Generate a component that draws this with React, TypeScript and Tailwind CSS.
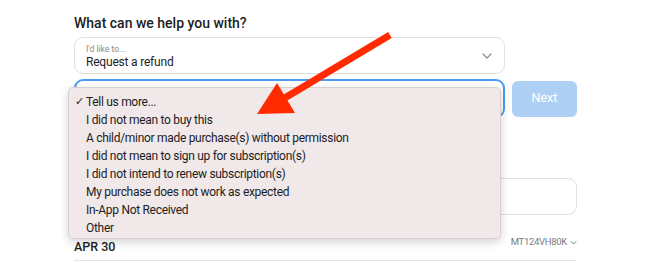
const options = [
  'I did not mean to buy this',
  'A child/minor made purchase(s) without permission',
  'I did not mean to sign up for subscription(s)',
  'I did not intend to renew subscription(s)',
  'My purchase does not work as expected',
  'In-App Not Received',
  'Other',
]

export default function App() {
  return (
    <div className="relative h-[263px] w-[650px] overflow-hidden bg-white text-[#1d1d1f] font-['Roboto','Liberation_Sans',Arial,sans-serif]">
      <div className="ml-[74px] w-[503px] pt-[14px]">
        <h1 className="text-[14px] font-medium leading-[18px]">What can we help you with?</h1>

        {/* first select */}
        <div className="mt-[5px] flex h-[37px] w-[431px] items-center justify-between rounded-[9px] border border-[#e0e0e0] pl-[11px] pr-[12px]">
          <div className="flex flex-col pt-[3px]">
            <span className="text-[8.5px] leading-[11px] text-[#8a8a8e]">I'd like to...</span>
            <span className="text-[12px] leading-[15px] tracking-[-0.2px]">Request a refund</span>
          </div>
          <svg width="10" height="6" viewBox="0 0 10 6" fill="none">
            <path d="M1 1l4 4 4-4" stroke="#8a8a8e" strokeWidth="1.2" strokeLinecap="round" strokeLinejoin="round" />
          </svg>
        </div>

        {/* second select + next */}
        <div className="mt-[5px] flex items-center">
          <div className="h-[39px] w-[431px] rounded-[9px] border-2 border-[#4a9df2]" />
          <button className="ml-[7px] h-[36px] w-[65px] rounded-[6px] bg-[#aed0f5] text-[12.5px] text-white">
            Next
          </button>
        </div>

        {/* hidden field */}
        <div className="mt-[60px] h-[37px] w-[503px] rounded-[9px] border border-[#e0e0e0]" />

        <div className="mt-[24px] flex items-center justify-between">
          <span className="text-[12.5px] font-medium leading-[16px]">APR 30</span>
          <span className="-mt-[10px] flex items-center gap-[3px] text-[9.5px] tracking-[-0.3px] text-[#7a7a7e]">
            MT124VH80K
            <svg width="7" height="5" viewBox="0 0 7 5" fill="none">
              <path d="M1 1.5l2.5 2.5 2.5-2.5" stroke="#7a7a7e" strokeWidth="1" strokeLinecap="round" />
            </svg>
          </span>
        </div>
        <div className="mt-[5px] h-px w-[503px] bg-[#e5e5e5]" />
      </div>

      {/* dropdown menu */}
      <div className="absolute left-[68px] top-[87px] h-[152px] w-[433px] rounded-[5px] border border-[#d8d0d1] bg-[#f0e8e9] pt-[5px] text-[12px] tracking-[-0.3px] shadow-[0_3px_10px_rgba(0,0,0,0.18)]">
        <div className="flex h-[18px] items-center">
          <span className="w-[17px] pl-[6px] text-[11px]">✓</span>
          <span>Tell us more...</span>
        </div>
        {options.map((o) => (
          <div key={o} className="flex h-[18px] items-center pl-[17px]">
            {o}
          </div>
        ))}
      </div>

      {/* red arrow */}
      <svg className="absolute left-0 top-0" width="650" height="263" viewBox="0 0 650 263">
        <line x1="390" y1="35" x2="283" y2="99" stroke="#ff2a00" strokeWidth="7" strokeLinecap="butt" />
        <polygon points="257,114 277,83 295,113" fill="#ff2a00" />
      </svg>
    </div>
  )
}
